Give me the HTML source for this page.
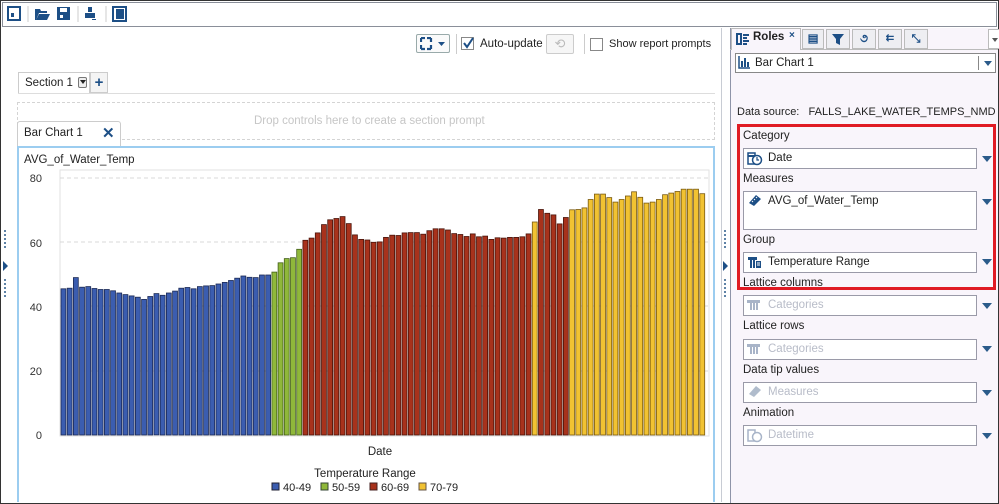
<!DOCTYPE html>
<html><head><meta charset="utf-8"><style>
*{box-sizing:border-box}
body{margin:0;width:999px;height:504px;overflow:hidden;background:#fff;font-family:"Liberation Sans",sans-serif;font-size:11.5px;color:#222;position:relative}
.a{position:absolute}
.fld{position:absolute;left:743px;width:234px;height:21px;border:1px solid #9a9aa8;background:#fff;font-size:11.5px;padding:3px 0 0 24px}
.lbl{position:absolute;left:743px;font-size:11.5px;color:#222}
.arr{position:absolute;left:982px;width:0;height:0;border-left:5px solid transparent;border-right:5px solid transparent;border-top:6px solid #2b5b8a}
.dis{color:#b8bcc8}
</style></head><body>
<div class="a" style="left:0;top:0;width:999px;height:504px;border:1px solid #333"></div>
<div class="a" style="left:2px;top:2px;width:995px;height:25px;border:1px solid #8a8f99;background:#fff"></div>
<svg class="a" style="left:0;top:0" width="140" height="28">
<rect x="8" y="7" width="12" height="13" fill="none" stroke="#1d4f86" stroke-width="2"/><rect x="11" y="13" width="3" height="4" fill="#1d4f86"/>
<line x1="28" y1="6" x2="28" y2="22" stroke="#ccc"/>
<path d="M35 20 L35 9 L40 9 L41 11 L47 11 L47 13 L39 13 L36 20Z M36 20 L39 14 L50 14 L47 20Z" fill="#1d4f86"/>
<rect x="57" y="7" width="13" height="13" fill="#1d4f86"/><rect x="60" y="8" width="7" height="4" fill="#fff"/><rect x="60" y="15" width="3" height="3" fill="#fff"/>
<line x1="78" y1="6" x2="78" y2="22" stroke="#ccc"/>
<path d="M88 7h4v5h-4z M85 13h10v5h-10z" fill="#1d4f86"/><rect x="92" y="19" width="4" height="1" fill="#1d4f86"/>
<line x1="106" y1="6" x2="106" y2="22" stroke="#ccc"/>
<rect x="113" y="7" width="13" height="14" fill="none" stroke="#1d4f86" stroke-width="2"/><rect x="116" y="9" width="8" height="10" fill="#1d4f86"/>
</svg>
<div class="a" style="left:2px;top:28px;width:720px;height:474px;border-right:1px solid #c8ccd4;background:#fff"></div>
<div class="a" style="left:416px;top:34px;width:34px;height:19px;border:1px solid #9aa;border-radius:2px;background:#fafafa"></div>
<svg class="a" style="left:420px;top:37px" width="28" height="14"><path d="M1 1h4M1 1v4M11 1h-4M11 1v4M1 12h4M1 12v-4M11 12h-4M11 12v-4" stroke="#1d4f86" stroke-width="2.2"/><path d="M18 5h7l-3.5 4z" fill="#1d4f86"/></svg>
<div class="a" style="left:456px;top:34px;width:1px;height:20px;background:#ccc"></div>
<div class="a" style="left:461px;top:37px;width:13px;height:13px;border:1px solid #888;background:#fff"></div>
<svg class="a" style="left:462px;top:37px" width="13" height="13"><path d="M2 6l3 4 6-9" stroke="#1d4f86" stroke-width="2" fill="none"/></svg>
<div class="a" style="left:480px;top:38px">Auto-update</div>
<div class="a" style="left:546px;top:34px;width:28px;height:20px;border:1px solid #ccc;border-radius:2px;background:#f6f6f6;color:#bbb;text-align:center;font-size:13px;line-height:18px">⟲</div>
<div class="a" style="left:584px;top:34px;width:1px;height:20px;background:#ccc"></div>
<div class="a" style="left:590px;top:38px;width:13px;height:13px;border:1px solid #888;background:#fff"></div>
<div class="a" style="left:609px;top:38px;font-size:11px">Show report prompts</div>
<div class="a" style="left:18px;top:72px;width:72px;height:21px;border:1px solid #ccc;border-bottom:none;background:#fff"></div>
<div class="a" style="left:25px;top:77px">Section 1</div>
<div class="a" style="left:78px;top:77px;width:9px;height:11px;border:1px solid #777;border-radius:2px;background:#eee"></div>
<div class="a" style="left:80px;top:80px;border-left:3px solid transparent;border-right:3px solid transparent;border-top:4px solid #222"></div>
<div class="a" style="left:90px;top:72px;width:18px;height:21px;border:1px solid #ccc;background:#f4f4f4;color:#1d4f86;font-weight:bold;font-size:15px;text-align:center;line-height:20px">+</div>
<div class="a" style="left:18px;top:93px;width:697px;height:1px;background:#ddd"></div>
<div class="a" style="left:17px;top:102px;width:698px;height:38px;border:1px dashed #d4d4d4"></div>
<div class="a" style="left:254px;top:115px;color:#c6c6c6">Drop controls here to create a section prompt</div>
<div class="a" style="left:17px;top:121px;width:104px;height:25px;border:1px solid #ccc;border-bottom:none;border-radius:3px 3px 0 0;background:#fff"></div>
<div class="a" style="left:24px;top:127px">Bar Chart 1</div>
<div class="a" style="left:102px;top:124px;color:#1d4f86;font-weight:bold;font-size:15px">✕</div>
<div class="a" style="left:17px;top:146px;width:698px;height:356px;border:2px solid #9ccdf0;border-bottom:none;background:#fff"></div>
<div class="a" style="left:24px;top:154px">AVG_of_Water_Temp</div>
<svg class="a" style="left:0;top:0" width="720" height="504">
<rect x="60" y="170" width="649" height="266" fill="none" stroke="#e2e2e2"/>
<g stroke="#d8d8d8" stroke-dasharray="4,3"><line x1="60" y1="178" x2="709" y2="178"/><line x1="60" y1="242" x2="709" y2="242"/><line x1="60" y1="306" x2="709" y2="306"/><line x1="60" y1="371" x2="709" y2="371"/></g>
<g font-family="Liberation Sans" font-size="11" fill="#333" text-anchor="end"><text x="42" y="182">80</text><text x="42" y="247">60</text><text x="42" y="311">40</text><text x="42" y="375">20</text><text x="42" y="439">0</text></g>
<g id="bars"></g>
<text x="380" y="455" font-family="Liberation Sans" font-size="11.5" fill="#222" text-anchor="middle">Date</text>
<text x="365" y="477" font-family="Liberation Sans" font-size="11.5" fill="#222" text-anchor="middle">Temperature Range</text>
<g font-family="Liberation Sans" font-size="11" fill="#222">
<rect x="272" y="483" width="7" height="7" fill="#3b5db0" stroke="#223"/><text x="283" y="491">40-49</text>
<rect x="321" y="483" width="7" height="7" fill="#8fb83a" stroke="#343"/><text x="332" y="491">50-59</text>
<rect x="370" y="483" width="7" height="7" fill="#a8321c" stroke="#422"/><text x="381" y="491">60-69</text>
<rect x="419" y="483" width="7" height="7" fill="#f1c232" stroke="#654"/><text x="430" y="491">70-79</text>
</g>
</svg>
<svg class="a" style="left:0;top:228px" width="10" height="75"><g fill="#2b5b8a"><circle cx="5" cy="3" r="1"/><circle cx="5" cy="7" r="1"/><circle cx="5" cy="11" r="1"/><circle cx="5" cy="15" r="1"/><circle cx="5" cy="19" r="1"/><circle cx="5" cy="52" r="1"/><circle cx="5" cy="56" r="1"/><circle cx="5" cy="60" r="1"/><circle cx="5" cy="64" r="1"/><circle cx="5" cy="68" r="1"/></g><path d="M3 33l5 5-5 5z" fill="#1d4f86"/></svg>
<svg class="a" style="left:720px;top:228px" width="10" height="75"><g fill="#2b5b8a"><circle cx="5" cy="3" r="1"/><circle cx="5" cy="7" r="1"/><circle cx="5" cy="11" r="1"/><circle cx="5" cy="15" r="1"/><circle cx="5" cy="19" r="1"/><circle cx="5" cy="52" r="1"/><circle cx="5" cy="56" r="1"/><circle cx="5" cy="60" r="1"/><circle cx="5" cy="64" r="1"/><circle cx="5" cy="68" r="1"/></g><path d="M3 33l5 5-5 5z" fill="#1d4f86"/></svg>
<div class="a" style="left:730px;top:28px;width:268px;height:475px;background:#f9f5fb;border-left:1px solid #8f94a8"></div>
<div class="a" style="left:730px;top:49px;width:268px;height:1px;background:#bbb"></div>
<div class="a" style="left:731px;top:28px;width:70px;height:22px;background:#f9f5fb;border:1px solid #bbb;border-bottom:none"></div>
<svg class="a" style="left:736px;top:33px" width="14" height="12"><path d="M1 1h4v10h-4zM7 2h6M7 5h4M7 8h6M7 11h4" stroke="#1d4f86" stroke-width="2" fill="none"/></svg>
<div class="a" style="left:753px;top:31px;font-weight:bold">Roles</div>
<div class="a" style="left:789px;top:30px;font-size:10px;font-weight:bold;color:#1d4f86">×</div>
<div class="a" style="left:802px;top:29px;width:22px;height:20px;border:1px solid #bbb;background:#eeeef2;color:#1d4f86;font-weight:bold;text-align:center;line-height:18px">▤</div>
<div class="a" style="left:826px;top:29px;width:24px;height:20px;border:1px solid #bbb;background:#eeeef2"></div>
<svg class="a" style="left:831px;top:33px" width="14" height="13"><path d="M1 1h12l-4 5v6l-4-2v-4z" fill="#1d4f86"/></svg>
<div class="a" style="left:852px;top:29px;width:24px;height:20px;border:1px solid #bbb;background:#eeeef2;color:#1d4f86;font-weight:bold;text-align:center;line-height:18px">૭</div>
<div class="a" style="left:878px;top:29px;width:24px;height:20px;border:1px solid #bbb;background:#eeeef2;color:#1d4f86;font-weight:bold;text-align:center;font-size:10px;line-height:18px">⇇</div>
<div class="a" style="left:904px;top:29px;width:24px;height:20px;border:1px solid #bbb;background:#eeeef2;color:#1d4f86;font-weight:bold;text-align:center;font-size:11px;line-height:18px">⤡</div>
<div class="a" style="left:988px;top:29px;width:11px;height:20px;border:1px solid #bbb;border-right:none;background:#fff"></div>
<div class="a" style="left:992px;top:38px;border-left:3px solid transparent;border-right:3px solid transparent;border-top:4px solid #555"></div>
<div class="a" style="left:735px;top:53px;width:261px;height:20px;border:1px solid #888;background:#fff"></div>
<svg class="a" style="left:738px;top:56px" width="12" height="13"><path d="M1 0v12h11" stroke="#1d4f86" stroke-width="1.5" fill="none"/><rect x="3" y="5" width="2" height="6" fill="#1d4f86"/><rect x="6" y="2" width="2" height="9" fill="#1d4f86"/><rect x="9" y="6" width="2" height="5" fill="#1d4f86"/></svg>
<div class="a" style="left:755px;top:57px">Bar Chart 1</div>
<div class="a" style="left:978px;top:56px;width:1px;height:14px;background:#888"></div>
<div class="a" style="left:984px;top:61px;border-left:4px solid transparent;border-right:4px solid transparent;border-top:5px solid #2b5b8a"></div>
<div class="a" style="left:737px;top:106px;font-size:11px;white-space:nowrap;width:260px;overflow:hidden">Data source:&nbsp;&nbsp; FALLS_LAKE_WATER_TEMPS_NMD</div>
<div class="a" style="left:737px;top:124px;width:259px;height:166px;border:3px solid #e01b24"></div>
<div class="lbl" style="top:130px">Category</div>
<div class="fld" style="top:148px">Date</div>
<svg class="a" style="left:747px;top:151px" width="16" height="15"><rect x="1" y="2" width="7" height="11" fill="none" stroke="#1d4f86" stroke-width="1.5"/><path d="M1 5h7" stroke="#1d4f86" stroke-width="2"/><circle cx="10" cy="9" r="4.5" fill="#fff" stroke="#1d4f86" stroke-width="1.5"/><path d="M10 6v3h2" stroke="#1d4f86" stroke-width="1.2" fill="none"/></svg>
<div class="arr" style="top:156px"></div>
<div class="lbl" style="top:173px">Measures</div>
<div class="fld" style="top:191px;height:39px">AVG_of_Water_Temp</div>
<svg class="a" style="left:748px;top:194px" width="14" height="12"><path d="M1 9l7-8 5 4-7 7z" fill="#1d4f86"/><path d="M4 7l1 1M6 5l1 1M8 3l1 1" stroke="#fff"/></svg>
<div class="arr" style="top:199px"></div>
<div class="lbl" style="top:234px">Group</div>
<div class="fld" style="top:252px">Temperature Range</div>
<svg class="a" style="left:747px;top:255px" width="16" height="14"><path d="M1 2h9v3h-2v8h-2v-8h-1v8h-2v-8h-2z" fill="#1d4f86"/><rect x="9" y="6" width="5" height="7" fill="#1d4f86"/><path d="M10 8h3M10 10h3" stroke="#fff"/></svg>
<div class="arr" style="top:259px"></div>
<div class="lbl" style="top:277px">Lattice columns</div>
<div class="fld dis" style="top:295px">Categories</div>
<svg class="a" style="left:747px;top:299px" width="14" height="12"><path d="M0 1h13v3h-2v7h-2v-7h-1v7h-2v-7h-1v7h-2v-7h-3z" fill="#a8b4c8"/></svg>
<div class="arr" style="top:303px"></div>
<div class="lbl" style="top:320px">Lattice rows</div>
<div class="fld dis" style="top:339px">Categories</div>
<svg class="a" style="left:747px;top:343px" width="14" height="12"><path d="M0 1h13v3h-2v7h-2v-7h-1v7h-2v-7h-1v7h-2v-7h-3z" fill="#a8b4c8"/></svg>
<div class="arr" style="top:346px"></div>
<div class="lbl" style="top:364px">Data tip values</div>
<div class="fld dis" style="top:382px">Measures</div>
<svg class="a" style="left:748px;top:385px" width="14" height="12"><path d="M1 9l7-8 5 4-7 7z" fill="#b0bccc"/></svg>
<div class="arr" style="top:390px"></div>
<div class="lbl" style="top:407px">Animation</div>
<div class="fld dis" style="top:425px">Datetime</div>
<svg class="a" style="left:747px;top:428px" width="16" height="15"><rect x="1" y="2" width="7" height="11" fill="none" stroke="#a8b4c8" stroke-width="1.5"/><circle cx="10" cy="9" r="4.5" fill="#fff" stroke="#a8b4c8" stroke-width="1.5"/></svg>
<div class="arr" style="top:433px"></div>
<script>
var v=[45.5,45.7,49,46,46.2,45.6,45.3,45.3,44.9,44.2,43.7,43.3,42.9,42.2,43.1,44,43.5,44.2,44.8,45.7,45.9,45.5,46.2,46.4,46.5,47,47.5,48.1,48.8,49.5,49.1,49,49.8,49.8,
50.7,53.6,54.9,55.2,57.8,
60.6,61.3,62.9,65.5,67,67.4,68,65.8,62.3,60.9,60.7,60,60.1,61.5,62.2,62.1,62.9,63,63,62.5,63.6,64.2,64.2,63.8,62.7,62.4,61.8,62.6,61.7,61.9,60.9,61.4,61.3,61.5,61.5,61.7,62.6,66.3,
70.2,69,68.5,65.7,67.7,70.1,
70.2,70.7,73.3,75,75,73.9,72.5,73.3,74.4,75.7,74,72.2,72.5,73.3,74.8,75.3,75.8,76.5,76.5,76.5,75.1];
var s='',n=v.length,p=(706-61)/n;
for(var i=0;i<n;i++){var c,st,x=v[i];
if(i<34){c='#3b5db0';st='#1c2a55'}else if(i<39){c='#8fb83a';st='#44601a'}else if(i<76||(i>76&&i<82)){c='#a8321c';st='#4a140b'}else{c='#f1c232';st='#7a5a10'}
var h=x*3.2125,y=435-h;
s+='<rect x="'+(61+i*p).toFixed(1)+'" y="'+y.toFixed(1)+'" width="'+(p-1.3).toFixed(1)+'" height="'+h.toFixed(1)+'" fill="'+c+'" stroke="'+st+'" stroke-width="0.8"/>';}
document.getElementById('bars').innerHTML=s;
</script>
</body></html>
